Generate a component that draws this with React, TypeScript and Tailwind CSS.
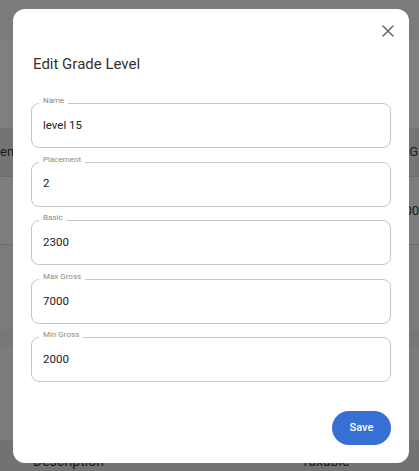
import React from "react";

const fields = [
  { label: "Name", value: "level 15" },
  { label: "Placement", value: "2" },
  { label: "Basic", value: "2300" },
  { label: "Max Gross", value: "7000" },
  { label: "Min Gross", value: "2000" },
];

function Field({ label, value }: { label: string; value: string }) {
  return (
    <div className="relative h-[45px] rounded-[8px] border border-[#c6c6c6] flex items-center px-[11px]">
      <span className="absolute left-[7px] top-[-8px] bg-white px-[4px] text-[8px] leading-[10px] text-[#8a8a8a]">
        {label}
      </span>
      <span className="text-[11.5px] text-[#222]">{value}</span>
    </div>
  );
}

export default function App() {
  return (
    <div
      className="relative w-[419px] h-[471px] overflow-hidden bg-[#7e7e7e]"
      style={{ fontFamily: "Roboto, 'Liberation Sans', sans-serif" }}
    >
      {/* page behind the overlay */}
      <div className="flex flex-col w-full">
        <div className="h-[19px] bg-[#7c7c7c] border-b border-[#787878]" />
        <div className="h-[21px] bg-[#7b7b7b]" />
        <div className="h-[88px] bg-[#7f7f7f]" />
        <div className="h-[49px] bg-[#747474] border-b border-[#6c6c6c] flex items-center justify-between text-[13px] text-[#151a26]">
          <span>em</span>
          <span className="mr-[1px]">G</span>
        </div>
        <div className="h-[68px] bg-[#7d7d7d] border-b border-[#6f6f6f] flex items-center justify-end text-[13px] text-[#151a26]">
          <span>00</span>
        </div>
        <div className="h-[85px] bg-[#7b7b7b]" />
        <div className="h-[17px] bg-[#777777]" />
        <div className="h-[93px] bg-[#7b7b7b]" />
        <div className="h-[31px] bg-[#727272] flex items-start text-[14px] text-[#151a26]">
          <span className="ml-[33px] mt-[13px] leading-[16px]">Description</span>
          <span className="ml-[197px] mt-[13px] leading-[16px]">Taxable</span>
        </div>
      </div>

      {/* modal */}
      <div className="absolute left-[13px] top-[9px] w-[396px] h-[454px] rounded-[12px] bg-white px-[18px] flex flex-col">
        <button className="absolute right-[15px] top-[16px] w-[12px] h-[12px] flex items-center justify-center">
          <svg width="12" height="12" viewBox="0 0 12 12">
            <path d="M1 1 L11 11 M11 1 L1 11" stroke="#666" strokeWidth="1.5" strokeLinecap="round" />
          </svg>
        </button>
        <h2 className="mt-[43px] ml-[2px] text-[15px] leading-[24px] text-[#333] font-normal">Edit Grade Level</h2>
        <div className="mt-[27px] flex flex-col gap-[13.6px]">
          {fields.map((f) => (
            <Field key={f.label} label={f.label} value={f.value} />
          ))}
        </div>
        <div className="mt-auto mb-[18px] flex justify-end">
          <button className="w-[59px] h-[34px] rounded-full bg-[#3670d5] text-white text-[11px] font-medium">
            Save
          </button>
        </div>
      </div>
    </div>
  );
}
